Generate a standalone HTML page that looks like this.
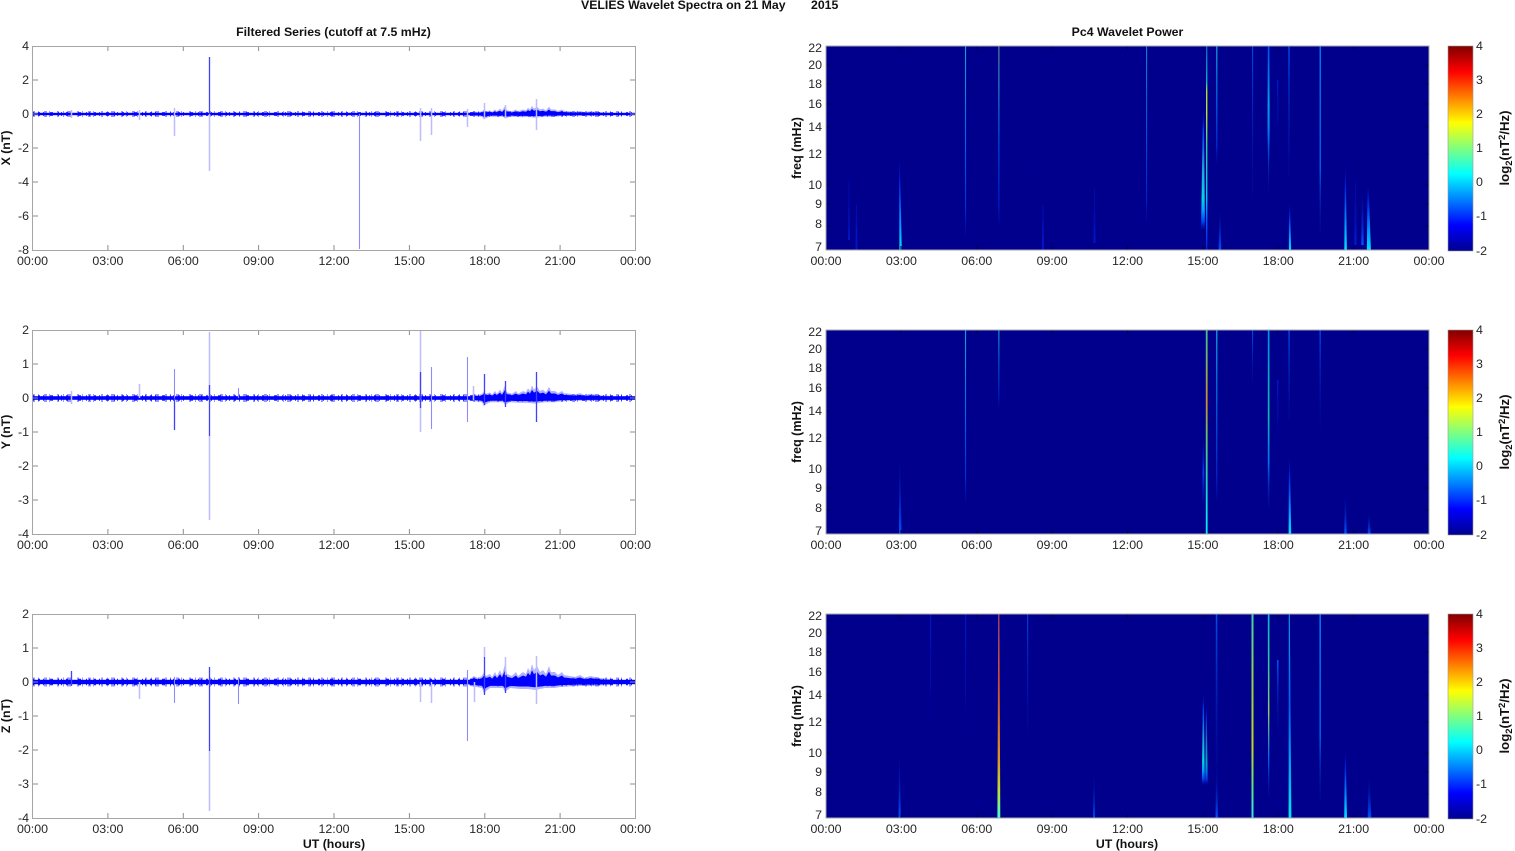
<!DOCTYPE html>
<html><head><meta charset="utf-8"><title>VELIES Wavelet Spectra</title>
<style>
html,body{margin:0;padding:0;background:#fff;width:1515px;height:851px;overflow:hidden}
svg{display:block;filter:blur(.35px)}
text{font-family:"Liberation Sans",Arial,sans-serif;font-size:12.4px;fill:#262626}
.b{font-weight:bold;font-size:12.3px;fill:#111}
.f{font-size:12.5px}
.c{font-size:13.2px}
.m{text-anchor:middle}.e{text-anchor:end}
.fr{fill:none;stroke:#a6a6a6;stroke-width:1}
.tk{stroke:#8c8c8c;stroke-width:1;fill:none}
.dt{stroke:#00004a;stroke-width:1;fill:none}
.lt{stroke:#bcbcff;stroke-width:1.5;fill:none}
.md{stroke:#8c8cff;stroke-width:1.1;fill:none}
.dk{stroke:#4040ff;stroke-width:1.3;fill:none}
.ca{stroke:#0000ff;stroke-dasharray:2 3 1 5 3 2 1 7 2 4 1 3 4 6;opacity:.4}
.cb{stroke:#0000ff;stroke-dasharray:1 4 2 3 1 6 3 5 1 2;opacity:.85}
</style></head><body>
<svg width="1515" height="851" viewBox="0 0 1515 851" xmlns="http://www.w3.org/2000/svg">
<defs>
<filter id="sb" filterUnits="userSpaceOnUse" x="820" y="0" width="620" height="851"><feGaussianBlur stdDeviation=".3 0"/></filter>
<linearGradient id="jet" x1="0" y1="1" x2="0" y2="0">
<stop offset="0" stop-color="#00008f"/><stop offset=".125" stop-color="#0000ff"/><stop offset=".375" stop-color="#00ffff"/><stop offset=".625" stop-color="#ffff00"/><stop offset=".875" stop-color="#ff0000"/><stop offset="1" stop-color="#800000"/>
</linearGradient>
<linearGradient id="g1" x1="0" y1="1" x2="0" y2="0"><stop offset="0" stop-color="#00e0ff"/><stop offset=".3" stop-color="#0090ff"/><stop offset=".7" stop-color="#0020e0"/><stop offset="1" stop-color="#00008c" stop-opacity="0"/></linearGradient>
<linearGradient id="g2" x1="0" y1="1" x2="0" y2="0"><stop offset="0" stop-color="#0050ff"/><stop offset="1" stop-color="#00008c" stop-opacity="0"/></linearGradient>
<linearGradient id="g2d" x1="0" y1="1" x2="0" y2="0"><stop offset="0" stop-color="#0018d0"/><stop offset="1" stop-color="#00008c" stop-opacity="0"/></linearGradient>
<linearGradient id="g3" x1="0" y1="0" x2="0" y2="1"><stop offset="0" stop-color="#10b4dc"/><stop offset=".45" stop-color="#0070f0"/><stop offset=".8" stop-color="#0030e0"/><stop offset="1" stop-color="#00008c" stop-opacity="0"/></linearGradient>
<linearGradient id="g4" x1="0" y1="0" x2="0" y2="1"><stop offset="0" stop-color="#0050f0"/><stop offset="1" stop-color="#00008c" stop-opacity="0"/></linearGradient>
<linearGradient id="g4d" x1="0" y1="0" x2="0" y2="1"><stop offset="0" stop-color="#0018c8"/><stop offset="1" stop-color="#00008c" stop-opacity="0"/></linearGradient>
<linearGradient id="g5" x1="0" y1="0" x2="0" y2="1"><stop offset="0" stop-color="#0090ff"/><stop offset=".6" stop-color="#0070f0"/><stop offset="1" stop-color="#00008c" stop-opacity="0"/></linearGradient>
<linearGradient id="g6" x1="0" y1="0" x2="0" y2="1"><stop offset="0" stop-color="#00008c" stop-opacity="0"/><stop offset=".5" stop-color="#0040f0"/><stop offset="1" stop-color="#00008c" stop-opacity="0"/></linearGradient>
<linearGradient id="g7" x1="0" y1="0" x2="0" y2="1"><stop offset="0" stop-color="#0050f0"/><stop offset=".35" stop-color="#00a0e8"/><stop offset=".55" stop-color="#0070f0"/><stop offset="1" stop-color="#00008c" stop-opacity="0"/></linearGradient>
<linearGradient id="a1" x1="0" y1="0" x2="0" y2="1"><stop offset="0" stop-color="#70a090"/><stop offset=".2" stop-color="#30a0d0"/><stop offset=".5" stop-color="#0060f0"/><stop offset=".85" stop-color="#0020d0"/><stop offset="1" stop-color="#00008c" stop-opacity="0"/></linearGradient>
<linearGradient id="a2" x1="0" y1="0" x2="0" y2="1"><stop offset="0" stop-color="#1060c0"/><stop offset=".17" stop-color="#00b0d0"/><stop offset=".22" stop-color="#a0e040"/><stop offset=".33" stop-color="#c0e030"/><stop offset=".5" stop-color="#30c8a0"/><stop offset=".75" stop-color="#00c0ff"/><stop offset=".85" stop-color="#0060ff"/><stop offset="1" stop-color="#0020e0"/></linearGradient>
<linearGradient id="a3" x1="0" y1="1" x2="0" y2="0"><stop offset="0" stop-color="#00008c" stop-opacity="0"/><stop offset=".08" stop-color="#0040f0"/><stop offset=".17" stop-color="#00a0ff"/><stop offset=".27" stop-color="#00d8e0"/><stop offset=".5" stop-color="#20a0e0"/><stop offset=".8" stop-color="#0040f0"/><stop offset="1" stop-color="#00008c" stop-opacity="0"/></linearGradient>
<linearGradient id="b1" x1="0" y1="0" x2="0" y2="1"><stop offset="0" stop-color="#40c090"/><stop offset=".2" stop-color="#90b050"/><stop offset=".35" stop-color="#d08830"/><stop offset=".5" stop-color="#70c060"/><stop offset=".75" stop-color="#20d0c0"/><stop offset="1" stop-color="#00f0ff"/></linearGradient>
<linearGradient id="b2" x1="0" y1="0" x2="0" y2="1"><stop offset="0" stop-color="#0090e0"/><stop offset=".45" stop-color="#10b8b0"/><stop offset=".7" stop-color="#0070f0"/><stop offset="1" stop-color="#00008c" stop-opacity="0"/></linearGradient>
<linearGradient id="c1" x1="0" y1="0" x2="0" y2="1"><stop offset="0" stop-color="#b05060"/><stop offset=".35" stop-color="#d05030"/><stop offset=".7" stop-color="#e09020"/><stop offset=".87" stop-color="#c0e030"/><stop offset="1" stop-color="#40ffd0"/></linearGradient>
<linearGradient id="c2" x1="0" y1="0" x2="0" y2="1"><stop offset="0" stop-color="#40d0b0"/><stop offset=".3" stop-color="#90d050"/><stop offset=".65" stop-color="#c0d820"/><stop offset=".85" stop-color="#60e080"/><stop offset="1" stop-color="#30e8e0"/></linearGradient>
<linearGradient id="c3" x1="0" y1="0" x2="0" y2="1"><stop offset="0" stop-color="#10b0d0"/><stop offset=".3" stop-color="#40c890"/><stop offset=".5" stop-color="#90d060"/><stop offset=".75" stop-color="#0060f0"/><stop offset="1" stop-color="#00008c" stop-opacity="0"/></linearGradient>
<linearGradient id="c4" x1="0" y1="0" x2="0" y2="1"><stop offset="0" stop-color="#00a8f0"/><stop offset=".45" stop-color="#0060f0"/><stop offset=".8" stop-color="#00b0f0"/><stop offset="1" stop-color="#00e8f0"/></linearGradient>
<path id="burst" d="M466 0L470 -1.5L474 -3L478 -2L482 -3L484 -5L486 -3L490 -4L492 -2.5L495 -5L497 -3L500 -6L502 -3.5L505 -9L507 -4L512 -3L516 -5L518 -3L523 -5L526 -4L528 -7L530 -5L532 -9L534 -6L537 -8L540 -5L543 -6L546 -4L549 -8L551 -5L555 -5L558 -3.5L562 -5L564 -3.5L570 -3L575 -2.5L580 -3.5L585 -2L590 -3L600 -2L610 -1.5L620 0L610 1.5L590 2L575 2L560 2.5L555 3L545 3L535 4L528 3.5L520 3.5L510 3L505 5L503 3L498 3L490 3L486 4.5L484 6L482 3L470 2Z"/>
</defs>
<rect width="1515" height="851" fill="#fff"/>

<text class="b" x="581" y="9">VELIES Wavelet Spectra on 21 May</text>
<text class="b" x="811" y="9">2015</text>
<text class="b m" x="333.5" y="36">Filtered Series (cutoff at 7.5 mHz)</text>
<text class="b m" x="1127.5" y="36">Pc4 Wavelet Power</text>

<!-- LEFT PANEL 1 -->
<g>
<use href="#burst" transform="translate(0,114) scale(1,.9)" fill="#0000ff" opacity=".3"/>
<use href="#burst" transform="translate(0,114) scale(1,.55)" fill="#0000ff"/>
<line class="ca" x1="33" y1="114" x2="635" y2="114" stroke-width="6"/>
<line class="cb" x1="33" y1="114" x2="635" y2="114" stroke-width="3.8"/>
<rect x="33" y="112.8" width="602" height="2.4" fill="#0000ff"/>
<path class="lt" d="M71.5 110V118M139.5 110V120M174.5 108V136M209.5 114V171M420.5 108V141M431.5 108V135M467.5 109V127M484.5 103V118M505.5 105V118M536.5 99V130"/>
<path class="dk" d="M209.5 57V114"/>
<path class="md" d="M359.5 114V249"/>
<path class="tk" d="M107.9 46v5M183.3 46v5M258.6 46v5M334 46v5M409.4 46v5M484.8 46v5M560.1 46v5M107.9 250v-5M183.3 250v-5M258.6 250v-5M334 250v-5M409.4 250v-5M484.8 250v-5M560.1 250v-5M33 80h5M33 114h5M33 148h5M33 182h5M33 216h5M635 80h-5M635 114h-5M635 148h-5M635 182h-5M635 216h-5"/>
<rect class="fr" x="32.5" y="46.5" width="603" height="204"/>
<text class="e" x="29" y="50">4</text><text class="e" x="29" y="84">2</text><text class="e" x="29" y="118">0</text><text class="e" x="29" y="152">-2</text><text class="e" x="29" y="186">-4</text><text class="e" x="29" y="220">-6</text><text class="e" x="29" y="254">-8</text>
<text class="m" x="32.5" y="265">00:00</text><text class="m" x="107.9" y="265">03:00</text><text class="m" x="183.3" y="265">06:00</text><text class="m" x="258.6" y="265">09:00</text><text class="m" x="334" y="265">12:00</text><text class="m" x="409.4" y="265">15:00</text><text class="m" x="484.8" y="265">18:00</text><text class="m" x="560.1" y="265">21:00</text><text class="m" x="635.5" y="265">00:00</text>
<text class="b m" transform="translate(10,148) rotate(-90)">X (nT)</text>
</g>

<!-- LEFT PANEL 2 -->
<g>
<use href="#burst" transform="translate(0,398) scale(1,1.4)" fill="#0000ff" opacity=".3"/>
<use href="#burst" transform="translate(0,398) scale(1,.9)" fill="#0000ff"/>
<line class="ca" x1="33" y1="398" x2="635" y2="398" stroke-width="8"/>
<line class="cb" x1="33" y1="398" x2="635" y2="398" stroke-width="5.4"/>
<rect x="33" y="396.2" width="602" height="3.6" fill="#0000ff"/>
<path class="lt" d="M71.5 391V404M139.5 384V398M209.5 332V398M209.5 436V520M420.5 330V432M473.5 386V400"/>
<path class="md" d="M174.5 369V398M238.5 388V398M431.5 367V429M467.5 357V422"/>
<path class="dk" d="M174.5 398V430M209.5 385V436M420.5 372V408M484.5 374V405M505.5 381V407M536.5 372V422"/>
<path class="tk" d="M107.9 330v5M183.3 330v5M258.6 330v5M334 330v5M409.4 330v5M484.8 330v5M560.1 330v5M107.9 534v-5M183.3 534v-5M258.6 534v-5M334 534v-5M409.4 534v-5M484.8 534v-5M560.1 534v-5M33 364h5M33 398h5M33 432h5M33 466h5M33 500h5M635 364h-5M635 398h-5M635 432h-5M635 466h-5M635 500h-5"/>
<rect class="fr" x="32.5" y="330.5" width="603" height="204"/>
<text class="e" x="29" y="334">2</text><text class="e" x="29" y="368">1</text><text class="e" x="29" y="402">0</text><text class="e" x="29" y="436">-1</text><text class="e" x="29" y="470">-2</text><text class="e" x="29" y="504">-3</text><text class="e" x="29" y="538">-4</text>
<text class="m" x="32.5" y="549">00:00</text><text class="m" x="107.9" y="549">03:00</text><text class="m" x="183.3" y="549">06:00</text><text class="m" x="258.6" y="549">09:00</text><text class="m" x="334" y="549">12:00</text><text class="m" x="409.4" y="549">15:00</text><text class="m" x="484.8" y="549">18:00</text><text class="m" x="560.1" y="549">21:00</text><text class="m" x="635.5" y="549">00:00</text>
<text class="b m" transform="translate(10,432) rotate(-90)">Y (nT)</text>
</g>

<!-- LEFT PANEL 3 -->
<g>
<use href="#burst" transform="translate(0,682) scale(1,2)" fill="#0000ff" opacity=".3"/>
<use href="#burst" transform="translate(0,682) scale(1,1.3)" fill="#0000ff"/>
<line class="ca" x1="33" y1="682" x2="635" y2="682" stroke-width="9"/>
<line class="cb" x1="33" y1="682" x2="635" y2="682" stroke-width="6.4"/>
<rect x="33" y="679.8" width="602" height="4.4" fill="#0000ff"/>
<path class="lt" d="M139.5 682V699M209.5 751V811M420.5 682V702M431.5 682V703M474.5 682V702M484.5 647V657M505.5 657V675M536.5 656V704"/>
<path class="md" d="M174.5 677V703M238.5 677V704M467.5 670V741"/>
<path class="dk" d="M71.5 671V686M209.5 667V751M484.5 657V695M505.5 675V693"/>
<path class="tk" d="M107.9 614v5M183.3 614v5M258.6 614v5M334 614v5M409.4 614v5M484.8 614v5M560.1 614v5M107.9 818v-5M183.3 818v-5M258.6 818v-5M334 818v-5M409.4 818v-5M484.8 818v-5M560.1 818v-5M33 648h5M33 682h5M33 716h5M33 750h5M33 784h5M635 648h-5M635 682h-5M635 716h-5M635 750h-5M635 784h-5"/>
<rect class="fr" x="32.5" y="614.5" width="603" height="204"/>
<text class="e" x="29" y="618">2</text><text class="e" x="29" y="652">1</text><text class="e" x="29" y="686">0</text><text class="e" x="29" y="720">-1</text><text class="e" x="29" y="754">-2</text><text class="e" x="29" y="788">-3</text><text class="e" x="29" y="822">-4</text>
<text class="m" x="32.5" y="833">00:00</text><text class="m" x="107.9" y="833">03:00</text><text class="m" x="183.3" y="833">06:00</text><text class="m" x="258.6" y="833">09:00</text><text class="m" x="334" y="833">12:00</text><text class="m" x="409.4" y="833">15:00</text><text class="m" x="484.8" y="833">18:00</text><text class="m" x="560.1" y="833">21:00</text><text class="m" x="635.5" y="833">00:00</text>
<text class="b m" transform="translate(10,716) rotate(-90)">Z (nT)</text>
<text class="b m" x="334" y="848">UT (hours)</text>
</g>

<!-- RIGHT PANEL 1 -->
<g>
<rect x="826" y="46" width="603" height="204" fill="#00008c"/>
<g filter="url(#sb)">
<path fill="url(#g2d)" d="M848.5 180h1l.5 60h-2zM856 205h1l.5 45h-2zM1031 110h1l.4 60h-1.8zM1042.5 205h1l.6 45h-2.2zM1094 188h1l.5 55h-2zM1355 180h1l.8 65h-2.6z"/>
<path fill="url(#g1)" d="M899 150h.6L901.8 250h-2.4z"/>
<path fill="url(#g2)" d="M1362 180h1l.8 65h-2.6z"/>
<path fill="url(#g1)" d="M1345 158h.6l1.3 92h-2.6z"/>
<path fill="url(#g1)" d="M1367.5 180h1l2.4 70h-4z"/>
<rect x="965.1" y="46" width="1" height="204" fill="url(#g3)"/>
<rect x="998.4" y="46" width="1" height="190" fill="url(#a1)"/>
<rect x="1146.1" y="46" width="1" height="190" fill="url(#g3)" opacity=".8"/>
<path fill="url(#a3)" d="M1203 105h.8L1205 232h-4z"/>
<rect x="1206" y="46" width="1.4" height="204" fill="url(#a2)"/>
<rect x="1216" y="46" width="1.5" height="125" fill="url(#g3)" opacity=".75"/>
<path fill="url(#g2)" d="M1219.6 200h.7l.9 50h-2.6z"/>
<rect x="1252" y="46" width="1.1" height="204" fill="url(#g4)" opacity=".9"/>
<path fill="url(#g7)" d="M1267.8 46h1.6l.3 80l-1.1 85l-1.1-85z"/>
<path fill="url(#g4d)" d="M1277 80h1.4v90h-1.4z"/>
<path fill="url(#g4)" d="M1288.3 46h1.4V220h-1.4z"/>
<path fill="url(#g1)" d="M1289 200h1l1.1 50h-2.2z"/>
<rect x="1319.6" y="46" width="1.2" height="204" fill="url(#g5)"/>
</g>
<path class="dt" d="M901 46v4M976.8 46v4M1052 46v4M1127.5 46v4M1203 46v4M1278 46v4M1353.6 46v4M901 250v-4M976.8 250v-4M1052 250v-4M1127.5 250v-4M1203 250v-4M1278 250v-4M1353.6 250v-4M826 65h4M826 84h4M826 104h4M826 127h4M826 154h4M826 185h4M826 204h4M826 226h4M1429 65h-4M1429 84h-4M1429 104h-4M1429 127h-4M1429 154h-4M1429 185h-4M1429 204h-4M1429 226h-4"/>
<rect class="fr" x="826" y="46" width="603" height="204"/>
<text class="e" x="822" y="52">22</text><text class="e" x="822" y="69">20</text><text class="e" x="822" y="88">18</text><text class="e" x="822" y="108">16</text><text class="e" x="822" y="131">14</text><text class="e" x="822" y="158">12</text><text class="e" x="822" y="189">10</text><text class="e" x="822" y="208">9</text><text class="e" x="822" y="228">8</text><text class="e" x="822" y="251">7</text>
<text class="m" x="826" y="265">00:00</text><text class="m" x="901.4" y="265">03:00</text><text class="m" x="976.8" y="265">06:00</text><text class="m" x="1052.1" y="265">09:00</text><text class="m" x="1127.5" y="265">12:00</text><text class="m" x="1202.9" y="265">15:00</text><text class="m" x="1278.3" y="265">18:00</text><text class="m" x="1353.6" y="265">21:00</text><text class="m" x="1429" y="265">00:00</text>
<text class="b f m" transform="translate(801,148) rotate(-90)">freq (mHz)</text>
<rect x="1448" y="46" width="25" height="205" fill="url(#jet)" stroke="#9a9a9a" stroke-width=".6"/>
<text x="1476" y="50">4</text><text x="1476" y="84">3</text><text x="1476" y="118">2</text><text x="1476" y="152">1</text><text x="1476" y="186">0</text><text x="1476" y="220">-1</text><text x="1476" y="255">-2</text>
<text class="b c m" transform="translate(1509,148) rotate(-90)">log<tspan dy="3" font-size="9.5">2</tspan><tspan dy="-3">(nT</tspan><tspan dy="-4" font-size="9.5">2</tspan><tspan dy="4">/Hz)</tspan></text>
</g>

<!-- RIGHT PANEL 2 -->
<g>
<rect x="826" y="330" width="603" height="204" fill="#00008c"/>
<g filter="url(#sb)">
<path fill="url(#g2)" d="M899 440h.6l2 94h-2.6z"/>
<rect x="965.1" y="330" width="1" height="185" fill="url(#g3)"/>
<path fill="url(#g3)" d="M998.4 330h1l-.2 85h-.6z"/>
<path fill="url(#g6)" d="M1203 430h.8l.8 85h-2.6z"/>
<rect x="1205.8" y="330" width="1.8" height="204" fill="url(#b1)"/>
<path fill="url(#g3)" d="M1216 330h1.5l-.2 185h-1.1z" opacity=".8"/>
<path fill="url(#g4)" d="M1252 330h1.1l-.3 75h-.5z"/>
<path fill="url(#b2)" d="M1267.8 330h1.7v190h-1.7z"/>
<path fill="url(#g4d)" d="M1277 380h1.4v90h-1.4z"/>
<path fill="url(#g4)" d="M1288.4 330h1.3l.3 120h-1.6z"/>
<path fill="url(#g1)" d="M1289 450h.8l1.4 84h-2.6z"/>
<path fill="url(#g4)" d="M1319.5 330h1.3l-.3 135h-.7z"/>
<path fill="url(#g2)" d="M1345 485h.6l1.2 49h-2.6z"/>
<path fill="url(#g2)" d="M1368.5 510h.8l1.4 24h-3z"/>
</g>
<path class="dt" d="M901 330v4M976.8 330v4M1052 330v4M1127.5 330v4M1203 330v4M1278 330v4M1353.6 330v4M901 534v-4M976.8 534v-4M1052 534v-4M1127.5 534v-4M1203 534v-4M1278 534v-4M1353.6 534v-4M826 349h4M826 368h4M826 388h4M826 411h4M826 438h4M826 469h4M826 488h4M826 510h4M1429 349h-4M1429 368h-4M1429 388h-4M1429 411h-4M1429 438h-4M1429 469h-4M1429 488h-4M1429 510h-4"/>
<rect class="fr" x="826" y="330" width="603" height="204"/>
<text class="e" x="822" y="336">22</text><text class="e" x="822" y="353">20</text><text class="e" x="822" y="372">18</text><text class="e" x="822" y="392">16</text><text class="e" x="822" y="415">14</text><text class="e" x="822" y="442">12</text><text class="e" x="822" y="473">10</text><text class="e" x="822" y="492">9</text><text class="e" x="822" y="512">8</text><text class="e" x="822" y="535">7</text>
<text class="m" x="826" y="549">00:00</text><text class="m" x="901.4" y="549">03:00</text><text class="m" x="976.8" y="549">06:00</text><text class="m" x="1052.1" y="549">09:00</text><text class="m" x="1127.5" y="549">12:00</text><text class="m" x="1202.9" y="549">15:00</text><text class="m" x="1278.3" y="549">18:00</text><text class="m" x="1353.6" y="549">21:00</text><text class="m" x="1429" y="549">00:00</text>
<text class="b f m" transform="translate(801,432) rotate(-90)">freq (mHz)</text>
<rect x="1448" y="330" width="25" height="205" fill="url(#jet)" stroke="#9a9a9a" stroke-width=".6"/>
<text x="1476" y="334">4</text><text x="1476" y="368">3</text><text x="1476" y="402">2</text><text x="1476" y="436">1</text><text x="1476" y="470">0</text><text x="1476" y="504">-1</text><text x="1476" y="539">-2</text>
<text class="b c m" transform="translate(1509,432) rotate(-90)">log<tspan dy="3" font-size="9.5">2</tspan><tspan dy="-3">(nT</tspan><tspan dy="-4" font-size="9.5">2</tspan><tspan dy="4">/Hz)</tspan></text>
</g>

<!-- RIGHT PANEL 3 -->
<g>
<rect x="826" y="614" width="603" height="204" fill="#00008c"/>
<g filter="url(#sb)">
<path fill="url(#g2)" d="M899 740h.6l1.2 78h-2.2z"/>
<rect x="930" y="614" width="1.2" height="160" fill="url(#g4d)"/>
<rect x="965" y="614" width="1.2" height="190" fill="url(#g4d)"/>
<path fill="url(#c1)" d="M998.2 614h1.2l.9 204h-2.9z"/>
<path fill="url(#g4)" d="M1027 614h1.2l.3 165h-1.4z" opacity=".8"/>
<path fill="url(#g2)" d="M1093.6 765h.8l.5 53h-1.8z"/>
<path fill="url(#a3)" d="M1203 690h.8l1 97h-3z"/>
<path fill="url(#a3)" d="M1206 700h.6l1.2 87h-2.6z" opacity=".75"/>
<path fill="url(#g4)" d="M1215.8 614h1.5l.5 204h-2.2z"/>
<path fill="url(#g2)" d="M1216.2 760h1l.7 58h-2.4z"/>
<rect x="1251.5" y="614" width="2" height="204" fill="url(#c2)"/>
<path fill="url(#c3)" d="M1267.8 614h1.7l-.2 195h-1.2z"/>
<path fill="url(#g4)" d="M1277 660h1.6l-.2 92h-1.2z"/>
<path fill="url(#c4)" d="M1288.8 614h1l1.6 204h-2.8z"/>
<rect x="1319.5" y="614" width="1.3" height="204" fill="url(#g5)"/>
<path fill="url(#g1)" d="M1345 745h.6l1.4 73h-2.8z"/>
<path fill="url(#g2)" d="M1368.5 770h.8l2 48h-3.6z"/>
</g>
<path class="dt" d="M901 614v4M976.8 614v4M1052 614v4M1127.5 614v4M1203 614v4M1278 614v4M1353.6 614v4M901 818v-4M976.8 818v-4M1052 818v-4M1127.5 818v-4M1203 818v-4M1278 818v-4M1353.6 818v-4M826 633h4M826 652h4M826 672h4M826 695h4M826 722h4M826 753h4M826 772h4M826 794h4M1429 633h-4M1429 652h-4M1429 672h-4M1429 695h-4M1429 722h-4M1429 753h-4M1429 772h-4M1429 794h-4"/>
<rect class="fr" x="826" y="614" width="603" height="204"/>
<text class="e" x="822" y="620">22</text><text class="e" x="822" y="637">20</text><text class="e" x="822" y="656">18</text><text class="e" x="822" y="676">16</text><text class="e" x="822" y="699">14</text><text class="e" x="822" y="726">12</text><text class="e" x="822" y="757">10</text><text class="e" x="822" y="776">9</text><text class="e" x="822" y="796">8</text><text class="e" x="822" y="819">7</text>
<text class="m" x="826" y="833">00:00</text><text class="m" x="901.4" y="833">03:00</text><text class="m" x="976.8" y="833">06:00</text><text class="m" x="1052.1" y="833">09:00</text><text class="m" x="1127.5" y="833">12:00</text><text class="m" x="1202.9" y="833">15:00</text><text class="m" x="1278.3" y="833">18:00</text><text class="m" x="1353.6" y="833">21:00</text><text class="m" x="1429" y="833">00:00</text>
<text class="b f m" transform="translate(801,716) rotate(-90)">freq (mHz)</text>
<text class="b m" x="1127" y="848">UT (hours)</text>
<rect x="1448" y="614" width="25" height="205" fill="url(#jet)" stroke="#9a9a9a" stroke-width=".6"/>
<text x="1476" y="618">4</text><text x="1476" y="652">3</text><text x="1476" y="686">2</text><text x="1476" y="720">1</text><text x="1476" y="754">0</text><text x="1476" y="788">-1</text><text x="1476" y="823">-2</text>
<text class="b c m" transform="translate(1509,716) rotate(-90)">log<tspan dy="3" font-size="9.5">2</tspan><tspan dy="-3">(nT</tspan><tspan dy="-4" font-size="9.5">2</tspan><tspan dy="4">/Hz)</tspan></text>
</g>
</svg>
</body></html>
